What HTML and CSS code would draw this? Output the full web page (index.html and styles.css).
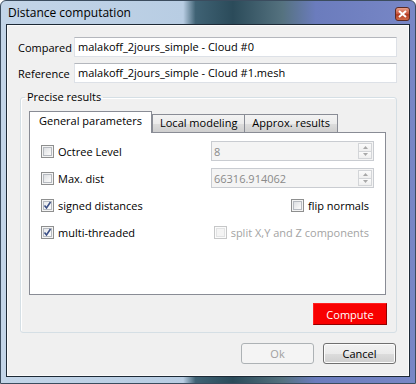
FILE: index.html
```html
<!DOCTYPE html>
<html lang="en">
<head>
  <meta charset="UTF-8">
  <title>Distance computation</title>
  <link rel="stylesheet" href="styles.css">
</head>
<body>
  <div class="window">
    <div class="titlebar">
      <span class="title">Distance computation</span>
      <span class="close-btn">
        <svg width="9" height="8" viewBox="0 0 9 8"><path d="M1 1 L8 7 M8 1 L1 7" stroke="#fff" stroke-width="2"/></svg>
      </span>
    </div>

    <div class="client">
      <div class="field-row">
        <span class="field-label">Compared</span>
        <div class="text-input">malakoff_2jours_simple - Cloud #0</div>
      </div>
      <div class="field-row">
        <span class="field-label">Reference</span>
        <div class="text-input">malakoff_2jours_simple - Cloud #1.mesh</div>
      </div>

      <fieldset class="group">
        <legend>Precise results</legend>

        <div class="tab-bar">
          <span class="tab active">General parameters</span>
          <span class="tab">Local modeling</span>
          <span class="tab">Approx. results</span>
        </div>
        <div class="tab-pane">
          <div class="opt-row">
            <label class="check"><span class="box"></span>Octree Level</label>
            <div class="spin">
              <span class="spin-value">8</span>
              <span class="spin-arrows">
                <span class="arrow-cell"><svg width="5" height="3" viewBox="0 0 5 3"><path d="M0 3 L2.5 0 L5 3 Z" fill="#a8a8a8"/></svg></span>
                <span class="arrow-cell"><svg width="5" height="3" viewBox="0 0 5 3"><path d="M0 0 L2.5 3 L5 0 Z" fill="#a8a8a8"/></svg></span>
              </span>
            </div>
          </div>
          <div class="opt-row">
            <label class="check"><span class="box"></span>Max. dist</label>
            <div class="spin">
              <span class="spin-value">66316.914062</span>
              <span class="spin-arrows">
                <span class="arrow-cell"><svg width="5" height="3" viewBox="0 0 5 3"><path d="M0 3 L2.5 0 L5 3 Z" fill="#a8a8a8"/></svg></span>
                <span class="arrow-cell"><svg width="5" height="3" viewBox="0 0 5 3"><path d="M0 0 L2.5 3 L5 0 Z" fill="#a8a8a8"/></svg></span>
              </span>
            </div>
          </div>
          <div class="opt-row">
            <label class="check"><span class="box checked"><svg width="11" height="11" viewBox="0 0 11 11"><path d="M2.5 5.5 L4.5 8 L8.5 2" fill="none" stroke="#3b4f86" stroke-width="1.6"/></svg></span>signed distances</label>
            <label class="check right"><span class="box"></span>flip normals</label>
          </div>
          <div class="opt-row">
            <label class="check"><span class="box checked"><svg width="11" height="11" viewBox="0 0 11 11"><path d="M2.5 5.5 L4.5 8 L8.5 2" fill="none" stroke="#3b4f86" stroke-width="1.6"/></svg></span>multi-threaded</label>
            <label class="check right disabled"><span class="box"></span>split X,Y and Z components</label>
          </div>
        </div>

        <div class="compute-row">
          <button class="btn-compute">Compute</button>
        </div>
      </fieldset>

      <div class="dialog-buttons">
        <button class="btn" disabled>Ok</button>
        <button class="btn">Cancel</button>
      </div>
    </div>
  </div>
</body>
</html>
```

FILE: styles.css
```css
body {
  margin: 0;
  font-family: "Open Sans", "Noto Sans", sans-serif;
  font-size: 11px;
  color: #000;
}

.window {
  width: 416px;
  height: 384px;
  box-sizing: border-box;
  display: flex;
  flex-direction: column;
  padding: 0 5px 6px 5px;
  border: 1px solid #3b4c5e;
  border-radius: 6px 6px 0 0;
  background: linear-gradient(to right, #c3d5e8 0%, #b8cde3 44%, #3f6274 47%, #2b4b5a 56%, #55727f 68%, #6b7cbd 76%, #7887c6 100%);
}

.titlebar {
  height: 23px;
  display: flex;
  align-items: center;
  justify-content: space-between;
  padding-left: 2px;
}

.title {
  font-size: 12px;
}

.close-btn {
  width: 15px;
  height: 14px;
  box-sizing: border-box;
  margin-top: 2px;
  display: flex;
  align-items: center;
  justify-content: center;
  border: 1px solid #5a2a24;
  border-radius: 3px;
  background: linear-gradient(#e8a08a, #c8533a 50%, #b03a22 55%, #d06a48);
}

.client {
  flex: 1;
  display: flex;
  flex-direction: column;
  padding: 12px 12px 12px 11px;
  background: #f0f0f0;
  border: 1px solid #1d2935;
  box-shadow: inset 0 0 0 1px #fbfbfb;
}

.field-row {
  display: flex;
  align-items: center;
  margin-bottom: 6px;
}

.field-label {
  width: 56px;
  flex: none;
}

.text-input {
  flex: 1;
  height: 20px;
  box-sizing: border-box;
  padding-left: 3px;
  line-height: 18px;
  background: #fff;
  border: 1px solid #dde1e7;
  border-top-color: #b4b7bd;
  white-space: nowrap;
}

.group {
  margin: 0 0 0 2px;
  padding: 6px 10px 7px 8px;
  border: 1px solid #d5dfe5;
  border-radius: 3px;
  box-shadow: inset 1px 1px 0 #fff;
}

.group legend {
  padding: 0 2px;
  margin-left: -4px;
  line-height: 16px;
}

.tab-bar {
  display: flex;
  align-items: flex-end;
  height: 21px;
}

.tab {
  height: 18px;
  box-sizing: border-box;
  padding: 0 7px;
  line-height: 16px;
  border: 1px solid #898c95;
  border-bottom: none;
  margin-left: -1px;
  background: linear-gradient(#f3f3f3, #ebebeb 50%, #dddddd 51%, #cfcfcf);
}

.tab.active {
  height: 22px;
  margin-left: 0;
  margin-bottom: -1px;
  padding: 1px 9px 0;
  background: #fff;
  position: relative;
  z-index: 1;
}

.tab.active + .tab {
  margin-left: 0;
}

.tab-pane {
  height: 163px;
  box-sizing: border-box;
  padding: 8px 11px 0;
  background: #fff;
  border: 1px solid #898c95;
  display: grid;
  grid-template-columns: 1fr auto;
  grid-auto-rows: 20px;
  row-gap: 7px;
  align-content: start;
}

.opt-row {
  display: contents;
}

.check {
  display: flex;
  align-items: center;
  gap: 4px;
}

.check.right {
  margin-right: 5px;
  justify-self: end;
}

.check.disabled {
  color: #a3a3a3;
}

.box {
  width: 13px;
  height: 13px;
  box-sizing: border-box;
  display: flex;
  align-items: center;
  justify-content: center;
  border: 1px solid #8e8f8f;
  background: linear-gradient(135deg, #d3d6da, #f7f7f7 70%);
  box-shadow: inset 0 0 0 1px #f4f4f4, inset 0 0 0 2px #b6bac0;
}

.box.checked {
  background: linear-gradient(135deg, #e0e2e6, #fafafa 70%);
}

.disabled .box {
  border-color: #c6c7c8;
  background: #f4f4f4;
  box-shadow: inset 0 0 0 1px #fbfbfb, inset 0 0 0 2px #e2e3e4;
}

.spin {
  width: 163px;
  height: 20px;
  box-sizing: border-box;
  display: flex;
  align-items: center;
  justify-content: space-between;
  padding: 0 1px 0 2px;
  background: #f4f4f4;
  border: 1px solid #c9ccd1;
  color: #8a8a8a;
}

.spin-arrows {
  width: 14px;
  height: 16px;
  display: flex;
  flex-direction: column;
}

.arrow-cell {
  flex: 1;
  display: flex;
  align-items: center;
  justify-content: center;
  border: 1px solid #d3d5d8;
  background: linear-gradient(#fbfbfb, #efefef);
}

.arrow-cell + .arrow-cell {
  border-top: none;
}

.compute-row {
  display: flex;
  justify-content: flex-end;
  margin: 8px -1px 0 0;
}

.btn-compute {
  width: 74px;
  height: 22px;
  font: inherit;
  color: #fff;
  background: #f80000;
  border: 1px solid #ff2020;
  border-right-color: #900000;
  border-bottom-color: #900000;
}

.dialog-buttons {
  display: flex;
  justify-content: flex-end;
  gap: 9px;
  margin-top: 10px;
  padding-right: 1px;
}

.btn {
  width: 73px;
  height: 21px;
  font: inherit;
  color: #000;
  border: 1px solid #707070;
  border-radius: 3px;
  background: linear-gradient(#f2f2f2, #ebebeb 50%, #dddddd 51%, #cfcfcf);
  box-shadow: inset 0 0 0 1px #fcfcfc;
}

.btn:disabled {
  color: #a0a0a0;
  border-color: #adb2b5;
  background: #f4f4f4;
  box-shadow: none;
}
```
